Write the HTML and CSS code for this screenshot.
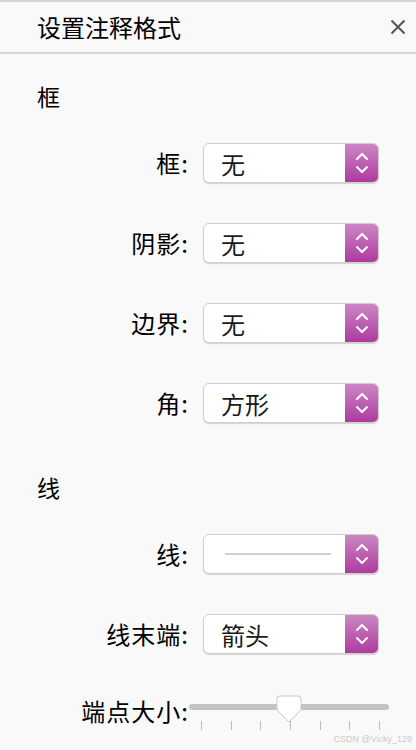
FILE: index.html
```html
<!DOCTYPE html>
<html lang="zh-CN">
<head>
  <meta charset="UTF-8">
  <meta name="viewport" content="width=device-width, initial-scale=1.0">
  <title>设置注释格式</title>
  <link rel="stylesheet" href="styles.css">
</head>
<body>

  <!-- Header -->
  <div class="panel-header">
    <div class="panel-title">设置注释格式</div>
    <button type="button" class="close-button" aria-label="关闭">
      <svg width="16" height="16" viewBox="0 0 16 16">
        <path d="M1.5 1.5 L14.5 14.5 M14.5 1.5 L1.5 14.5" stroke="#555" stroke-width="2" fill="none"/>
      </svg>
    </button>
  </div>

  <!-- Box section -->
  <div class="section">
    <div class="section-title">框</div>

    <div class="form-row">
      <label class="row-label">框:</label>
      <div class="select-box">
        <span class="select-value">无</span>
        <span class="stepper"></span>
      </div>
    </div>

    <div class="form-row">
      <label class="row-label">阴影:</label>
      <div class="select-box">
        <span class="select-value">无</span>
        <span class="stepper"></span>
      </div>
    </div>

    <div class="form-row">
      <label class="row-label">边界:</label>
      <div class="select-box">
        <span class="select-value">无</span>
        <span class="stepper"></span>
      </div>
    </div>

    <div class="form-row">
      <label class="row-label">角:</label>
      <div class="select-box">
        <span class="select-value">方形</span>
        <span class="stepper"></span>
      </div>
    </div>
  </div>

  <!-- Line section -->
  <div class="section section-line">
    <div class="section-title">线</div>

    <div class="form-row">
      <label class="row-label">线:</label>
      <div class="select-box">
        <span class="select-value"><span class="line-sample"></span></span>
        <span class="stepper"></span>
      </div>
    </div>

    <div class="form-row">
      <label class="row-label">线末端:</label>
      <div class="select-box">
        <span class="select-value">箭头</span>
        <span class="stepper"></span>
      </div>
    </div>

    <div class="slider-row">
      <label class="row-label slider-label">端点大小:</label>
      <div class="slider">
        <div class="slider-track">
          <div class="slider-thumb">
            <svg width="26" height="28" viewBox="0 0 26 28">
              <path d="M4 1 H22 Q25 1 25 4 V15 L13 27 L1 15 V4 Q1 1 4 1 Z" fill="#fff" stroke="#c8c8c8" stroke-width="1"/>
            </svg>
          </div>
        </div>
        <div class="slider-ticks">
          <span></span><span></span><span></span><span></span><span></span><span></span><span></span>
        </div>
      </div>
    </div>
  </div>

  <div class="watermark">CSDN @Vicky_129</div>

  <script>
    // stepper chevrons
    document.querySelectorAll('.stepper').forEach(function (el) {
      el.innerHTML = '<svg width="14" height="26" viewBox="0 0 14 26">' +
        '<path d="M2 9 L7 4 L12 9 M2 17 L7 22 L12 17" stroke="#fff" stroke-width="2" fill="none" stroke-linecap="round" stroke-linejoin="round"/>' +
        '</svg>';
    });
  </script>
</body>
</html>
```

FILE: styles.css
```css
* {
  margin: 0;
  padding: 0;
  box-sizing: border-box;
}

html, body {
  height: 100%;
}

body {
  background-color: #f9f9f9;
  font-family: "Noto Sans CJK SC", "Noto Sans", sans-serif;
  color: #000;
  overflow: hidden;
  position: relative;
}

.panel-header {
  height: 54px;
  border-top: 2px solid #d6d6d6;
  border-bottom: 2px solid #d6d6d6;
  display: flex;
  align-items: center;
  justify-content: space-between;
  padding: 0 6px 0 37px;
}

.panel-title {
  font-size: 24px;
  line-height: 30px;
}

.close-button {
  background: none;
  border: none;
  width: 24px;
  height: 24px;
  display: flex;
  align-items: center;
  justify-content: center;
}

.section {
  padding: 26px 0 0 37px;
}

.section-line {
  padding-top: 8px;
}

.section-title {
  font-size: 23px;
  line-height: 32px;
  margin-bottom: 31px;
}

.form-row {
  display: flex;
  align-items: center;
  height: 40px;
  margin-bottom: 40px;
}

.row-label {
  width: 152px;
  text-align: right;
  font-size: 24px;
  line-height: 32px;
  letter-spacing: 1px;
  margin-right: 14px;
}

.select-box {
  width: 176px;
  height: 40px;
  background-color: #fff;
  border: 1px solid #cfcfcf;
  border-radius: 6px;
  box-shadow: 0 1px 1px rgba(0, 0, 0, 0.15);
  display: flex;
  overflow: hidden;
}

.select-value {
  flex: 1;
  display: flex;
  align-items: center;
  padding-left: 17px;
  font-size: 24px;
  color: #1a1a1a;
}

.line-sample {
  display: block;
  width: 106px;
  height: 2px;
  margin-left: 4px;
  background-color: #d0d0d0;
}

.stepper {
  width: 33px;
  display: flex;
  align-items: center;
  justify-content: center;
  background: linear-gradient(to bottom, #cc86c4, #ae3ba0);
}

.slider-row {
  display: flex;
  align-items: flex-start;
  margin-top: -2px;
}

.slider-label {
  margin-right: 0;
  width: 153px;
  margin-left: -1px;
  padding-top: 3px;
}

.slider {
  width: 200px;
}

.slider-track {
  position: relative;
  height: 6px;
  margin-top: 12px;
  background-color: #c4c4c4;
  border-radius: 3px;
}

.slider-thumb {
  position: absolute;
  left: 87px;
  top: -9px;
  width: 26px;
  height: 28px;
}

.slider-ticks {
  display: flex;
  justify-content: space-between;
  padding: 0 9px 0 12px;
  margin-top: 11px;
}

.slider-ticks span {
  display: block;
  width: 1px;
  height: 9px;
  background-color: #bdbdbd;
}

.watermark {
  position: absolute;
  right: 4px;
  bottom: 6px;
  font-family: "Liberation Sans", Arial, sans-serif;
  font-size: 9px;
  color: #c9c9c9;
}
```
